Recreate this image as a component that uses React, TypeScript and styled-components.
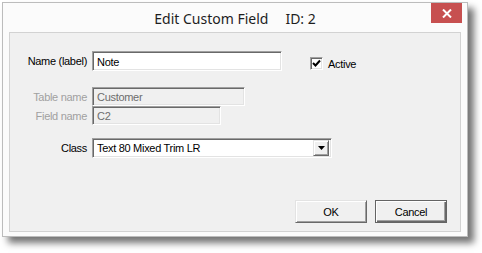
import React from 'react';
import styled, { createGlobalStyle, css } from 'styled-components';

const GlobalStyle = createGlobalStyle`
  html, body {
    margin: 0;
    padding: 0;
    background: #ffffff;
  }
  body {
    font-family: "Liberation Sans", Arial, sans-serif;
    font-size: 11px;
    letter-spacing: -0.3px;
    color: #000;
  }
`;

const Desktop = styled.div`
  width: 482px;
  height: 253px;
  padding: 2px 0 0 2px;
  box-sizing: border-box;
`;

const Window = styled.div`
  width: 466px;
  box-sizing: border-box;
  display: flex;
  flex-direction: column;
  background: #fbfbfb;
  border: 1px solid #bcbcbc;
  padding: 0 6px 4px 6px;
  box-shadow: 6px 6px 7px rgba(0, 0, 0, 0.55);
`;

const TitleBar = styled.div`
  height: 29px;
  margin: 0 -6px;
  display: grid;
  grid-template-columns: 1fr auto 1fr;
  align-items: center;
`;

const Title = styled.div`
  grid-column: 2;
  font-family: "Noto Sans", "Open Sans", sans-serif;
  font-size: 14px;
  letter-spacing: 0;
  color: #1e1e1e;
  white-space: pre;
  display: flex;
  gap: 17px;
  padding-top: 1px;
`;

const CloseButton = styled.div`
  grid-column: 3;
  justify-self: end;
  align-self: start;
  margin-right: 5px;
  width: 31px;
  height: 20px;
  background: #c75050;
  display: flex;
  align-items: center;
  justify-content: center;
`;

const Client = styled.div`
  background: #f0f0f0;
  border: 1px solid #d2d2d2;
  padding: 18px 13px 8px 0;
  display: flex;
  flex-direction: column;
`;

const Row = styled.div<{ $mt?: number }>`
  display: flex;
  align-items: stretch;
  margin-top: ${(p) => p.$mt ?? 0}px;
`;

const Label = styled.div<{ $disabled?: boolean }>`
  width: 77px;
  margin-right: 5px;
  display: flex;
  align-items: center;
  justify-content: flex-end;
  color: ${(p) => (p.$disabled ? '#a0a0a0' : '#000')};
`;

const sunken = css`
  box-sizing: border-box;
  border: 1px solid;
  border-color: #a0a0a0 #ffffff #ffffff #a0a0a0;
  box-shadow: inset 1px 1px 0 #696969, inset -1px -1px 0 #e3e3e3;
`;

const TextBox = styled.div<{ $w: number; $h: number; $disabled?: boolean }>`
  ${sunken};
  width: ${(p) => p.$w}px;
  height: ${(p) => p.$h}px;
  padding: 1px 3px 0 4px;
  display: flex;
  align-items: center;
  background: ${(p) => (p.$disabled ? '#f0f0f0' : '#ffffff')};
  color: ${(p) => (p.$disabled ? '#6d6d6d' : '#000')};
`;

const CheckGroup = styled.label`
  display: flex;
  align-items: center;
  gap: 5px;
  margin-left: 28px;
  margin-top: 6px;
  align-self: flex-start;
`;

const CheckBox = styled.span`
  ${sunken};
  width: 13px;
  height: 13px;
  background: #fff;
  display: flex;
  align-items: center;
  justify-content: center;
`;

const Select = styled.div`
  ${sunken};
  width: 240px;
  height: 20px;
  background: #fff;
  padding: 2px 2px 2px 4px;
  display: flex;
  align-items: center;
  justify-content: space-between;
`;

const raised = css`
  box-sizing: border-box;
  border: 1px solid;
  border-color: #e3e3e3 #696969 #696969 #e3e3e3;
  box-shadow: inset 1px 1px 0 #ffffff, inset -1px -1px 0 #a0a0a0;
  background: #f0f0f0;
`;

const DropButton = styled.span`
  ${raised};
  width: 16px;
  height: 16px;
  display: flex;
  align-items: center;
  justify-content: center;
`;

const Buttons = styled.div`
  display: flex;
  justify-content: flex-end;
  gap: 8px;
  margin-top: 42px;
`;

const Button = styled.button<{ $default?: boolean }>`
  ${raised};
  width: 72px;
  height: 23px;
  padding: 0;
  font-family: "Liberation Sans", Arial, sans-serif;
  font-size: 11px;
  letter-spacing: -0.3px;
  color: #000;
  ${(p) =>
    p.$default &&
    css`
      border-color: #646464;
      box-shadow: inset 1px 1px 0 #ffffff, inset -1px -1px 0 #696969, inset -2px -2px 0 #a0a0a0;
    `}
`;

export default function App() {
  return (
    <>
      <GlobalStyle />
      <Desktop>
        <Window>
          <TitleBar>
            <Title>
              <span>Edit Custom Field</span>
              <span>ID: 2</span>
            </Title>
            <CloseButton>
              <svg width="10" height="9" viewBox="0 0 10 9">
                <path d="M1 0.5 L9 8.5 M9 0.5 L1 8.5" stroke="#fff" strokeWidth="2" />
              </svg>
            </CloseButton>
          </TitleBar>
          <Client>
            <Row>
              <Label>Name (label)</Label>
              <TextBox $w={190} $h={20}>Note</TextBox>
              <CheckGroup>
                <CheckBox>
                  <svg width="9" height="9" viewBox="0 0 9 9">
                    <path d="M1 4 L3.5 6.5 L8 1.5" stroke="#000" strokeWidth="2" fill="none" />
                  </svg>
                </CheckBox>
                <span>Active</span>
              </CheckGroup>
            </Row>
            <Row $mt={16}>
              <Label $disabled>Table name</Label>
              <TextBox $w={153} $h={19} $disabled>Customer</TextBox>
            </Row>
            <Row>
              <Label $disabled>Field name</Label>
              <TextBox $w={129} $h={19} $disabled>C2</TextBox>
            </Row>
            <Row $mt={13}>
              <Label>Class</Label>
              <Select>
                <span>Text 80 Mixed Trim LR</span>
                <DropButton>
                  <svg width="7" height="4" viewBox="0 0 7 4">
                    <path d="M0 0 H7 L3.5 4 Z" fill="#000" />
                  </svg>
                </DropButton>
              </Select>
            </Row>
            <Buttons>
              <Button>OK</Button>
              <Button $default>Cancel</Button>
            </Buttons>
          </Client>
        </Window>
      </Desktop>
    </>
  );
}
